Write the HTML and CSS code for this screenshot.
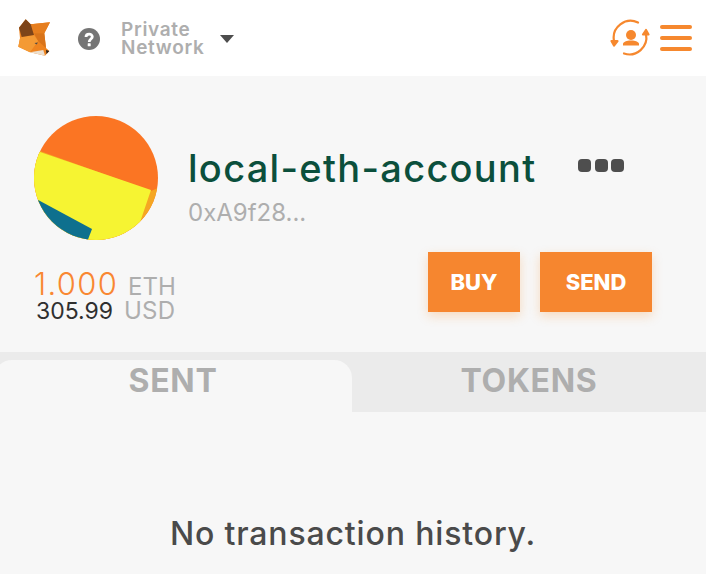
FILE: index.html
```html
<!DOCTYPE html>
<html lang="en">
<head>
<meta charset="utf-8">
<title>MetaMask</title>
<link rel="stylesheet" href="styles.css">
</head>
<body>
<header class="topbar">
  <div class="topbar-left">
    <svg class="fox" viewBox="0 0 36 38" width="36" height="38">
      <polygon points="9.700,.3 14.700,5.300 34,3.300 28.300,14.300 30,29 33.300,32 29,36.700 14,33.300 2.300,27.700 4,19.300 3,8.700" fill="#ee8420"/>
      <polygon points="14.700,5.300 34,3.300 28.300,14.300 18,14.300" fill="#e67e1e"/>
      <polygon points="18,14.300 28.300,14.300 30,29 22,22" fill="#d9741a"/>
      <polygon points="4,19.300 5.700,18 18,16 22,22 14,33.300 2.300,27.700" fill="#f49a34"/>
      <polygon points="9.700,.3 14.700,5.300 18,16 5.700,18 3,8.700" fill="#7d4419"/>
      <polygon points="14,33.300 27.300,31 29,36.700" fill="#ece0d0"/>
      <polygon points="18.500,24 22,23.500 20.500,25.500" fill="#4d4a48"/>
      <polygon points="30,31 33.300,32 30.500,35" fill="#26211e"/>
    </svg>
    <svg class="help" viewBox="0 0 22 22" width="22" height="22">
      <circle cx="11" cy="11" r="11" fill="#757575"/>
      <path d="M8 9C8 5 14.300 5.200 14.300 8.800C14.300 11 11.200 11.200 11.200 14" fill="none" stroke="#fff" stroke-width="2.800"/>
      <rect x="9.700" y="15.300" width="3" height="3" rx=".5" fill="#fff"/>
    </svg>
    <div class="network">Private<br>Network</div>
    <span class="caret"></span>
  </div>
  <div class="topbar-right">
    <svg class="switcher" viewBox="0 0 40 40" width="40" height="40" fill="none" stroke="#f6882e" stroke-width="2.200" stroke-linecap="round">
      <path d="M28 4.500A17 17 0 0 0 4 23"/>
      <path d="M1.500 23 4 27.500 7.500 23z" fill="#f6882e" stroke-linejoin="round"/>
      <path d="M14 35.500A17 17 0 0 0 36 16"/>
      <path d="M33 16.500 36 12 38.500 16.500z" fill="#f6882e" stroke-linejoin="round"/>
      <circle cx="21" cy="17" r="5" fill="#f6882e" stroke="none"/>
      <path d="M13 27.500v-1.500c0-1.800 3-3 6-3.500h4c3 .5 6 1.700 6 3.500v1.500z" fill="#f6882e" stroke="none"/>
    </svg>
    <div class="menu"><span></span><span></span><span></span></div>
  </div>
</header>
<main class="main">
  <section class="account">
    <div class="identity">
      <svg class="avatar" viewBox="0 0 124 124" width="124" height="124">
        <defs><clipPath id="ac"><circle cx="62" cy="62" r="62"/></clipPath></defs>
        <g clip-path="url(#ac)">
          <rect width="124" height="124" fill="#fb7523"/>
          <polygon points="-10,48 6,35 117,75 124,72 124,124 -10,124" fill="#f5a623"/>
          <polygon points="-10,30 6,36 117,74 100,124 -10,124" fill="#f6f432"/>
          <polygon points="-10,76.500 58,113 50,134 -10,134" fill="#0e708e"/>
        </g>
      </svg>
      <div class="names">
        <div class="name-row"><h1 class="name">local-eth-account</h1><div class="dots"><span></span><span></span><span></span></div></div>
        <div class="address">0xA9f28...</div>
      </div>
    </div>
    <div class="balance-row">
      <div class="balance">
        <div class="eth"><span class="eth-val">1.000</span><span class="eth-unit">ETH</span></div>
        <div class="usd"><span class="usd-val">305.99</span><span class="usd-unit">USD</span></div>
      </div>
      <div class="actions">
        <button class="btn btn-buy">BUY</button>
        <button class="btn btn-send">SEND</button>
      </div>
    </div>
  </section>
  <nav class="tabs">
    <div class="tab tab-active">SENT</div>
    <div class="tab tab-other">TOKENS</div>
  </nav>
  <p class="empty">No transaction history.</p>
</main>
</body>
</html>
```
FILE: styles.css
```css
* { box-sizing: border-box; }
html, body { margin: 0; height: 100%; }
body {
  width: 706px;
  height: 574px;
  overflow: hidden;
  background: #f7f7f7;
  font-family: "Inter", "Open Sans", sans-serif;
  display: flex;
  flex-direction: column;
}
.topbar {
  height: 76px;
  background: #fff;
  display: flex;
  align-items: center;
  justify-content: space-between;
  padding: 0 14px 0 16px;
  flex: none;
}
.topbar-left { display: flex; align-items: center; }
.help { margin-left: 26px; margin-top: 2px; }
.network {
  margin-left: 21px;
  margin-top: 1px;
  color: #aeaeae;
  font-size: 19px;
  font-weight: 600;
  letter-spacing: .7px;
  line-height: 18px;
}
.caret {
  margin-left: 15px;
  margin-top: 1px;
  border-left: 7.500px solid transparent;
  border-right: 7.500px solid transparent;
  border-top: 8px solid #4d4d4d;
}
.topbar-right { display: flex; align-items: center; gap: 10px; }
.menu { display: flex; flex-direction: column; gap: 7px; width: 32px; }
.menu span { height: 4px; border-radius: 2px; background: #f6882e; }
.main { flex: 1; display: flex; flex-direction: column; }
.account { padding: 40px 54px 0 34px; height: 276px; flex: none; }
.identity { display: flex; }
.names { margin-left: 30px; padding-top: 27px; flex: 1; }
.name-row { display: flex; align-items: flex-start; justify-content: space-between; }
.name {
  margin: 0;
  color: #0b4f3c;
  font-size: 38px;
  font-weight: 500;
  letter-spacing: 1.300px;
  line-height: 50px;
  white-space: nowrap;
}
.dots { display: flex; gap: 3.500px; margin-top: 16px; margin-right: 28px; }
.dots span { width: 13px; height: 13px; border-radius: 4px; background: #4e4e4e; }
.address { color: #aeaeae; font-size: 24px; line-height: 30px; margin-top: 5px; }
.balance-row { display: flex; justify-content: space-between; align-items: flex-start; margin-top: 12px; }
.balance { margin-top: 17px; }
.eth, .usd { display: flex; align-items: baseline; }
.eth { line-height: 29px; height: 29px; }
.usd { line-height: 26px; height: 26px; padding-left: 2px; }
.eth-val { color: #f98732; font-size: 31px; font-weight: 300; letter-spacing: 1.300px; width: 94px; }
.eth-unit { color: #aeaeae; font-size: 24px; }
.usd-val { color: #2f2f2f; font-size: 23px; width: 88px; }
.usd-unit { color: #aeaeae; font-size: 24px; letter-spacing: .2px; }
.actions { display: flex; gap: 20px; }
.btn {
  height: 60px;
  border: 0;
  padding: 0;
  background: #f6862f;
  color: #fff;
  font-family: inherit;
  font-size: 22px;
  font-weight: 800;
  box-shadow: 0 4px 10px rgba(247, 134, 28, .25);
}
.btn-buy { width: 92px; }
.btn-send { width: 112px; }
.tabs {
  height: 60px;
  background: #ebebeb;
  padding-top: 8px;
  display: flex;
  flex: none;
}
.tab {
  text-align: center;
  color: #aeaeae;
  font-size: 32px;
  font-weight: 700;
  letter-spacing: .7px;
  line-height: 42px;
}
.tab-active { width: 358px; margin-left: -6px; background: #f7f7f7; border-radius: 18px 18px 0 0; }
.tab-other { flex: 1; }
.empty {
  margin: 102px 0 0;
  text-align: center;
  color: #4a4a4a;
  font-size: 32px;
  font-weight: 500;
  letter-spacing: .85px;
  line-height: 40px;
}
```
